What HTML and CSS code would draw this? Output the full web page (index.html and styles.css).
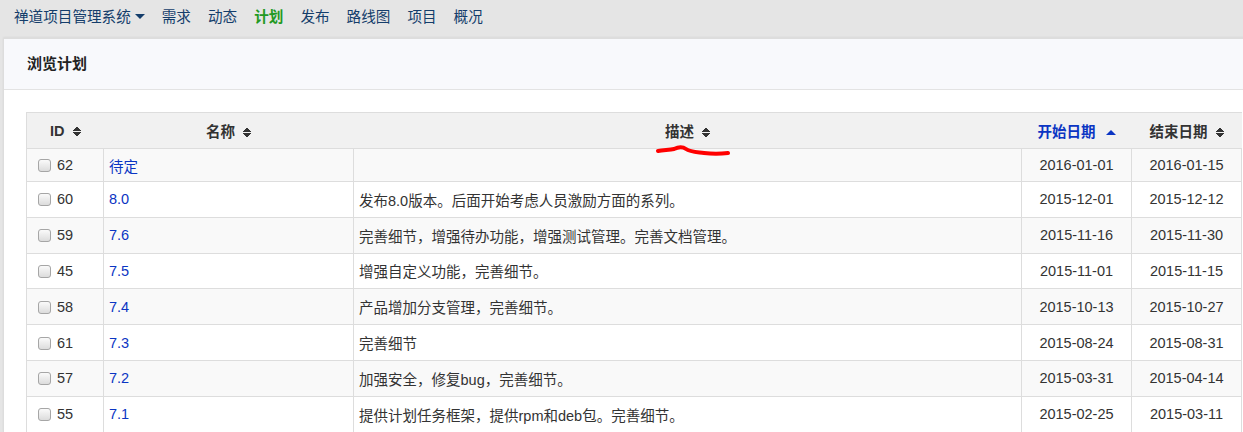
FILE: index.html
```html
<!DOCTYPE html>
<html lang="zh-CN">
<head>
    <meta charset="UTF-8">
    <title>浏览计划</title>
    <link rel="stylesheet" href="styles.css">
</head>
<body>

<div class="navbar">
    <a class="nav-item brand" href="#">禅道项目管理系统<span class="caret"></span></a>
    <a class="nav-item" href="#">需求</a>
    <a class="nav-item" href="#">动态</a>
    <a class="nav-item active" href="#">计划</a>
    <a class="nav-item" href="#">发布</a>
    <a class="nav-item" href="#">路线图</a>
    <a class="nav-item" href="#">项目</a>
    <a class="nav-item" href="#">概况</a>
</div>

<div class="panel">
    <div class="panel-heading">浏览计划</div>
    <div class="panel-body">
        <table class="plan-table">
            <colgroup>
                <col class="col-id">
                <col class="col-name">
                <col class="col-desc">
                <col class="col-date">
                <col class="col-date">
            </colgroup>
            <thead>
            <tr>
                <th>ID <span class="sort"></span></th>
                <th>名称 <span class="sort"></span></th>
                <th class="th-desc">描述 <span class="sort"></span>
                    <svg class="scribble" width="80" height="12" viewBox="0 0 80 12">
                        <path d="M2 7 C8 6 14 6 18 5 C22 3 26 2 30 5 C34 8 40 8 48 9 C56 10 64 10 72 9" fill="none" stroke="#f00" stroke-width="4" stroke-linecap="round"/>
                    </svg>
                </th>
                <th class="sorted">开始日期 <span class="sort-up"></span></th>
                <th>结束日期 <span class="sort"></span></th>
            </tr>
            </thead>
            <tbody>
            <tr class="short">
                <td class="cell-id"><span class="check"></span>62</td>
                <td><a href="#">待定</a></td>
                <td></td>
                <td class="cell-date">2016-01-01</td>
                <td class="cell-date">2016-01-15</td>
            </tr>
            <tr>
                <td class="cell-id"><span class="check"></span>60</td>
                <td><a href="#">8.0</a></td>
                <td>发布8.0版本。后面开始考虑人员激励方面的系列。</td>
                <td class="cell-date">2015-12-01</td>
                <td class="cell-date">2015-12-12</td>
            </tr>
            <tr>
                <td class="cell-id"><span class="check"></span>59</td>
                <td><a href="#">7.6</a></td>
                <td>完善细节，增强待办功能，增强测试管理。完善文档管理。</td>
                <td class="cell-date">2015-11-16</td>
                <td class="cell-date">2015-11-30</td>
            </tr>
            <tr>
                <td class="cell-id"><span class="check"></span>45</td>
                <td><a href="#">7.5</a></td>
                <td>增强自定义功能，完善细节。</td>
                <td class="cell-date">2015-11-01</td>
                <td class="cell-date">2015-11-15</td>
            </tr>
            <tr>
                <td class="cell-id"><span class="check"></span>58</td>
                <td><a href="#">7.4</a></td>
                <td>产品增加分支管理，完善细节。</td>
                <td class="cell-date">2015-10-13</td>
                <td class="cell-date">2015-10-27</td>
            </tr>
            <tr>
                <td class="cell-id"><span class="check"></span>61</td>
                <td><a href="#">7.3</a></td>
                <td>完善细节</td>
                <td class="cell-date">2015-08-24</td>
                <td class="cell-date">2015-08-31</td>
            </tr>
            <tr>
                <td class="cell-id"><span class="check"></span>57</td>
                <td><a href="#">7.2</a></td>
                <td>加强安全，修复bug，完善细节。</td>
                <td class="cell-date">2015-03-31</td>
                <td class="cell-date">2015-04-14</td>
            </tr>
            <tr>
                <td class="cell-id"><span class="check"></span>55</td>
                <td><a href="#">7.1</a></td>
                <td>提供计划任务框架，提供rpm和deb包。完善细节。</td>
                <td class="cell-date">2015-02-25</td>
                <td class="cell-date">2015-03-11</td>
            </tr>
            </tbody>
        </table>
    </div>
</div>

</body>
</html>
```

FILE: styles.css
```css
body {
    font-family: "Liberation Sans", Arial, "Noto Sans CJK SC", sans-serif;
    font-size: 14.5px;
    color: #333;
    margin: 0;
    background: #e5e5e5;
    overflow: hidden;
}

.navbar {
    display: flex;
    align-items: center;
    height: 35px;
    padding-left: 5.5px;
}

.nav-item {
    font-size: 14.6px;
    color: #143d6b;
    text-decoration: none;
    padding: 0 8.5px;
    line-height: 35px;
}

.nav-item.active {
    color: #229922;
    font-weight: bold;
}

.caret {
    display: inline-block;
    width: 0;
    height: 0;
    border-left: 5px solid transparent;
    border-right: 5px solid transparent;
    border-top: 5px solid #143d6b;
    margin-left: 4px;
    vertical-align: 3px;
}

.panel {
    margin: 3px 0 0 3px;
    width: 1300px;
    background: #fff;
    border-left: 1px solid #ddd;
    border-top: 1px solid #ddd;
    box-shadow: 0 -1px 2px rgba(0, 0, 0, 0.05);
}

.panel-heading {
    height: 50px;
    line-height: 50px;
    padding-left: 23px;
    background: #f8f9fc;
    border-bottom: 1px solid #e3e3e3;
    font-size: 15px;
    font-weight: bold;
    color: #222;
}

.panel-body {
    padding: 22px 0 0 22px;
}

.plan-table {
    border-collapse: collapse;
    table-layout: fixed;
    width: 1215px;
}

.col-id { width: 77px; }
.col-name { width: 250px; }
.col-desc { width: 668px; }
.col-date { width: 110px; }

.plan-table th {
    height: 35px;
    background: #f1f1f1;
    border: 1px solid #ddd;
    border-left: none;
    border-right: none;
    font-weight: bold;
    color: #333;
    text-align: center;
    padding: 0;
}

.plan-table th:first-child {
    border-left: 1px solid #ddd;
}

.plan-table th.sorted {
    color: #0b35c3;
}

.th-desc {
    position: relative;
}

.scribble {
    position: absolute;
    left: 302px;
    top: 31px;
}

.sort {
    display: inline-block;
    width: 8px;
    height: 11px;
    margin-left: 4px;
    vertical-align: -1px;
    background:
        linear-gradient(to bottom right, transparent 50%, #333 50%) 0 0 / 4px 5px no-repeat,
        linear-gradient(to bottom left, transparent 50%, #333 50%) 4px 0 / 4px 5px no-repeat,
        linear-gradient(to top right, transparent 50%, #333 50%) 0 6px / 4px 5px no-repeat,
        linear-gradient(to top left, transparent 50%, #333 50%) 4px 6px / 4px 5px no-repeat;
}

.sort-up {
    display: inline-block;
    width: 0;
    height: 0;
    border-left: 5px solid transparent;
    border-right: 5px solid transparent;
    border-bottom: 5px solid #0b35c3;
    margin-left: 6px;
    vertical-align: 2px;
}

.plan-table td {
    height: 34.8px;
    border: 1px solid #ddd;
    padding: 0 5px;
    white-space: nowrap;
}

.plan-table tr.short td {
    height: 32px;
}

.plan-table tbody tr:nth-child(odd) td {
    background: #f9f9f9;
}

.plan-table td a {
    color: #0b35c3;
    text-decoration: none;
}

.cell-id {
    padding-left: 11px !important;
}

.cell-date {
    text-align: center;
}

.check {
    display: inline-block;
    width: 11px;
    height: 11px;
    border: 1px solid #a6a6a6;
    border-radius: 3px;
    background: linear-gradient(#fafafa, #dcdcdc);
    vertical-align: -2px;
    margin-right: 6px;
}
```
